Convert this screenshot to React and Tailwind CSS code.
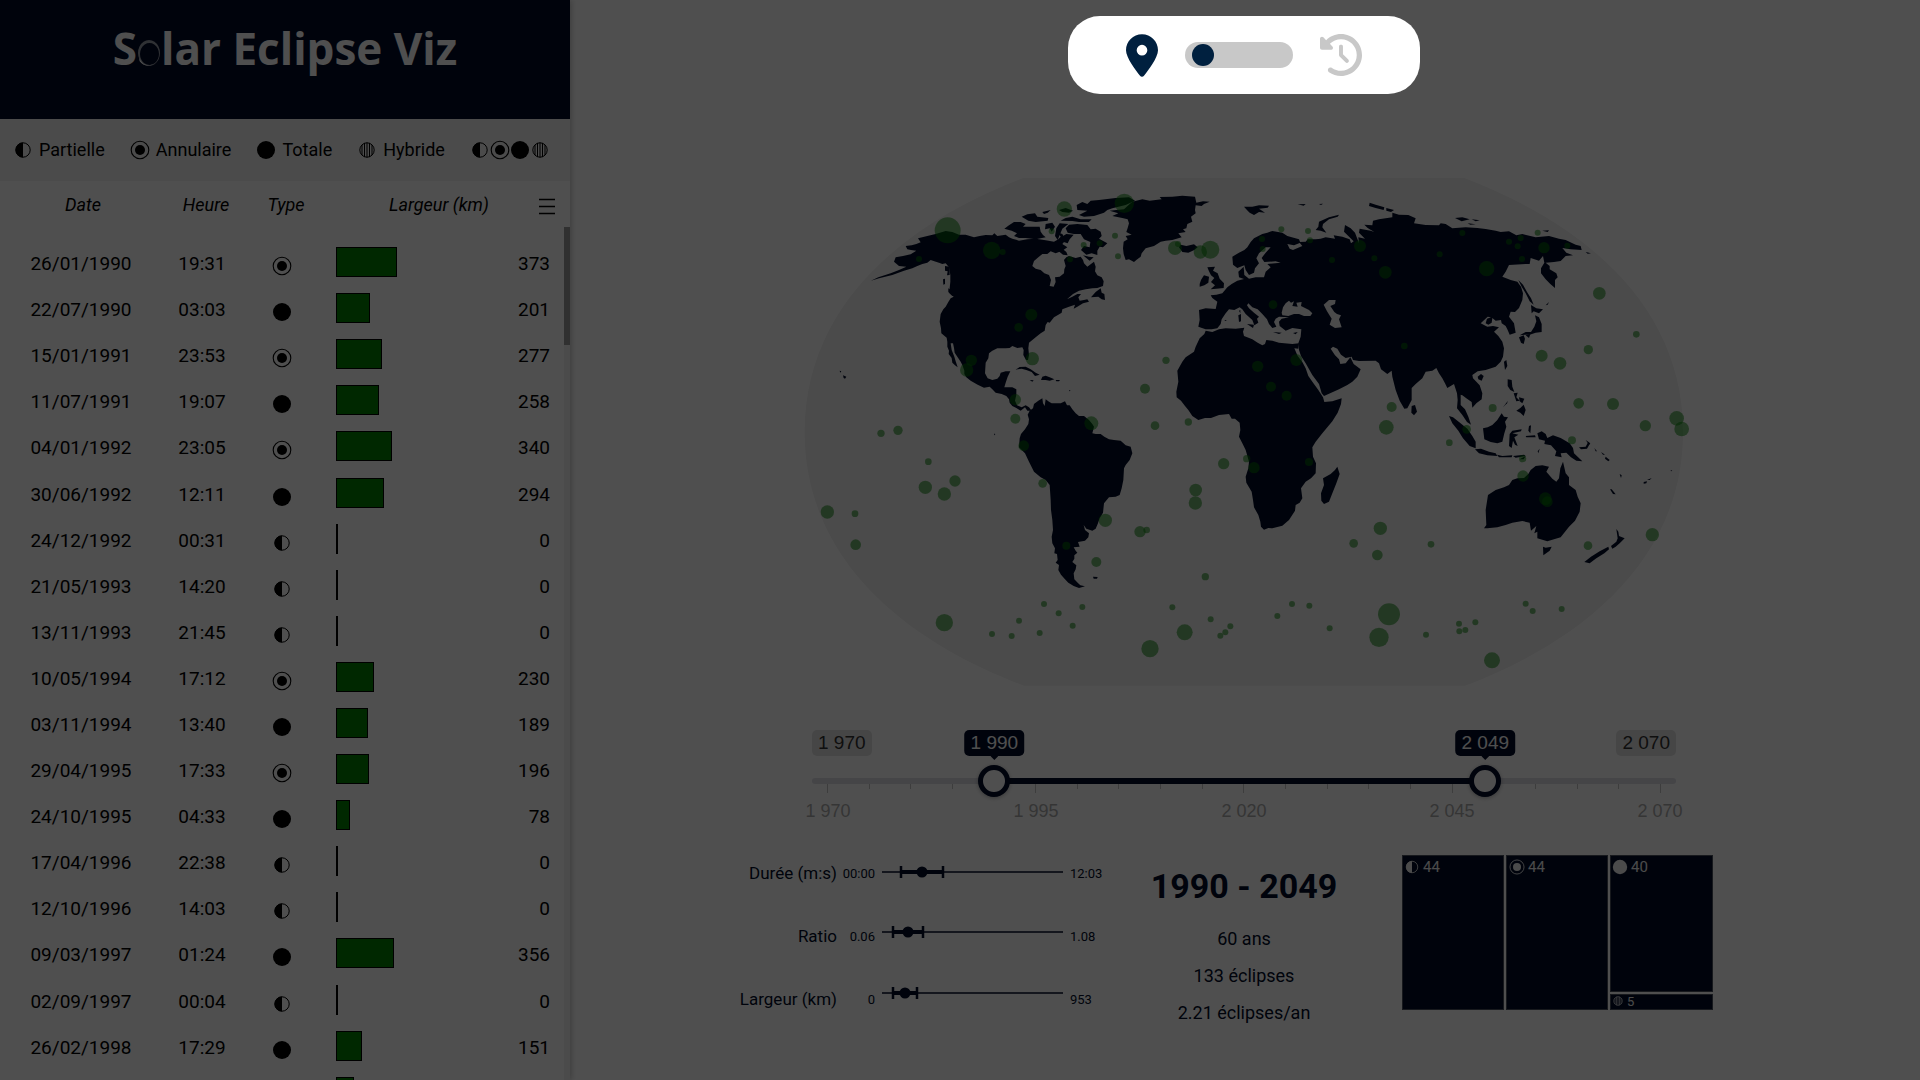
import React from "react";
import { FaLocationDot, FaClockRotateLeft } from "react-icons/fa6";

const ROWS = [
  ["26/01/1990", "19:31", "annular", 373],
  ["22/07/1990", "03:03", "total", 201],
  ["15/01/1991", "23:53", "annular", 277],
  ["11/07/1991", "19:07", "total", 258],
  ["04/01/1992", "23:05", "annular", 340],
  ["30/06/1992", "12:11", "total", 294],
  ["24/12/1992", "00:31", "partial", 0],
  ["21/05/1993", "14:20", "partial", 0],
  ["13/11/1993", "21:45", "partial", 0],
  ["10/05/1994", "17:12", "annular", 230],
  ["03/11/1994", "13:40", "total", 189],
  ["29/04/1995", "17:33", "annular", 196],
  ["24/10/1995", "04:33", "total", 78],
  ["17/04/1996", "22:38", "partial", 0],
  ["12/10/1996", "14:03", "partial", 0],
  ["09/03/1997", "01:24", "total", 356],
  ["02/09/1997", "00:04", "partial", 0],
  ["26/02/1998", "17:29", "total", 151],
  ["22/08/1998", "02:06", "annular", 99],
];

const SEA =
  "M733,54 C400,180 77,420 77,816 C77,1212 400,1452 735,1577 H2058 C2389,1452 2712,1212 2712,816 C2712,420 2389,180 2055,54 Z";

const LAND = [
  // North America
  "345,305 350,292 372,288 395,283 412,272 396,270 385,268 380,258 398,256 412,252 425,247 417,235 445,228 470,222 500,213 520,216 540,224 560,224 585,232 602,228 620,225 640,226 646,220 655,228 680,224 690,232 700,236 720,242 745,238 770,236 800,241 825,245 838,238 845,230 838,218 850,222 860,240 850,252 865,262 850,272 830,280 815,274 805,282 790,282 778,292 765,303 760,318 770,326 785,330 796,340 810,345 816,360 812,378 824,380 830,366 828,352 842,350 855,340 856,328 860,318 855,300 862,292 870,288 890,294 905,290 912,300 915,310 925,320 936,312 945,305 950,320 948,334 955,346 968,352 974,364 972,378 955,384 940,385 920,388 900,392 882,402 864,418 880,410 895,402 906,402 898,412 902,422 915,420 925,418 930,425 912,430 895,440 884,446 888,434 870,440 850,448 848,458 838,464 825,472 812,488 806,486 800,495 797,512 785,520 770,532 750,548 748,565 750,585 747,600 741,600 733,585 734,570 730,562 715,564 700,558 692,564 680,565 655,565 640,572 630,580 628,595 620,608 618,640 626,655 640,660 655,656 662,648 665,638 680,634 694,634 686,650 680,668 676,682 700,682 712,688 712,704 708,722 714,736 728,742 740,736 750,742 758,752 745,752 738,742 725,752 712,744 700,738 692,728 690,718 682,708 668,702 650,698 640,688 632,680 615,683 596,674 575,662 562,652 556,642 556,632 550,615 545,605 535,590 527,578 525,564 522,550 515,550 518,570 526,590 530,604 536,622 528,616 520,608 518,594 509,582 510,572 505,560 505,545 503,533 487,520 486,505 482,485 485,462 493,448 500,440 508,426 515,415 524,410 512,400 512,385 514,365 514,345 510,322 500,310 490,312 480,308 466,304 455,300 445,308 430,312 415,318 400,325 375,332 340,345 300,355 276,362 298,352 335,340 360,330 382,320 360,318",
  // South America
  "752,752 762,745 765,732 778,722 790,715 792,730 797,738 800,718 810,725 818,730 845,730 858,724 864,736 872,736 880,748 890,760 900,768 915,768 930,780 940,792 945,800 940,820 950,822 965,822 976,830 990,838 1005,840 1025,842 1040,856 1055,860 1060,880 1052,900 1040,915 1035,925 1033,960 1028,985 1022,1005 1010,1010 990,1012 975,1030 972,1058 962,1075 956,1092 950,1106 940,1112 922,1106 914,1095 918,1110 930,1120 928,1132 918,1142 897,1146 902,1160 884,1162 890,1172 895,1178 886,1186 886,1196 880,1206 892,1216 890,1228 884,1240 886,1258 896,1268 904,1276 918,1279 900,1284 884,1278 868,1268 858,1258 846,1244 838,1230 840,1215 830,1208 836,1200 834,1182 826,1180 828,1165 820,1150 818,1130 822,1110 820,1080 816,1050 815,1020 812,975 800,960 785,952 765,935 750,905 738,880 720,862 722,835 726,822 738,808 748,792 750,778 746,764",
  // Greenland
  "992,152 1012,150 1035,148 1048,136 1060,125 1090,118 1112,122 1130,120 1148,118 1142,111 1180,110 1210,107 1248,110 1252,128 1272,124 1292,125 1275,132 1268,138 1250,136 1248,150 1250,160 1236,170 1240,185 1225,192 1222,205 1212,208 1220,216 1198,220 1208,232 1180,240 1160,242 1145,245 1125,258 1100,265 1088,280 1085,290 1072,300 1065,306 1050,298 1040,300 1034,282 1032,265 1034,245 1046,238 1040,228 1058,224 1042,216 1046,204 1050,190 1046,178 1030,174 1000,168 1018,160",
  // Arctic islands
  "893,135 910,126 925,132 935,122 960,120 1010,114 1050,112 1068,122 1040,135 1000,145 985,150 975,158 945,168 915,170 900,165 925,152 895,150",
  "845,182 860,174 880,170 905,178 938,178 930,186 900,186 880,183",
  "676,206 690,196 705,186 725,186 740,192 732,200 755,200 782,200 785,215 792,225 800,232 770,238 740,234 720,234 705,228 714,220 698,212",
  "728,170 745,163 768,160 775,170 808,174 806,182 770,186 748,182",
  "790,156 815,150 806,158 795,162",
  "840,150 860,144 882,152 870,158 850,156",
  "860,205 870,194 895,192 925,195 935,208 950,206 965,215 968,228 960,236 985,250 972,262 962,260 955,272 955,285 938,280 922,284 906,270 915,258 932,262 934,246 915,238 905,222 885,222 866,218",
  "800,192 820,188 828,200 818,215 812,205 798,208",
  "832,205 842,190 868,192 850,206 840,230 836,240 828,228",
  "846,232 862,222 884,224 872,238 866,250 854,246",
  "832,268 840,260 852,268 862,276 866,286 852,284 842,276",
  "912,286 930,290 944,292 932,302",
  "936,412 950,396 965,385 968,398 976,402 978,420 968,418 958,410",
  "508,385 520,392 530,406 520,408 508,396",
  "498,318 512,320 512,345 504,346 506,334 498,332",
  "492,358 498,356 498,372 493,374",
  // Caribbean and Pacific islands
  "710,629 722,621 740,620 755,628 770,638 782,644 768,648 758,636 742,630 728,626",
  "790,650 800,647 812,652 826,658 812,662 800,660 786,660",
  "830,660 843,660 840,664 832,664", "752,660 764,661 760,665", "192,646 202,650 198,656 194,654",
  "182,632 187,634 184,638", "645,820 649,824 646,826", "870,690 875,692 871,694",
  "942,1250 956,1251 954,1256 944,1256",
  // North Atlantic
  "1200,262 1205,254 1222,258 1245,253 1256,262 1246,270 1228,278 1210,276",
  "1395,140 1420,140 1440,136 1470,137 1466,143 1440,146 1458,158 1440,156 1425,165 1412,158 1406,152",
  "1285,322 1308,320 1302,332 1316,340 1322,356 1335,370 1334,384 1312,386 1295,388 1308,376 1296,366 1306,354 1296,346 1290,334",
  "1262,372 1266,360 1275,346 1290,350 1288,368 1276,376 1262,380",
  // Eurasia
  "1360,290 1380,278 1396,270 1405,262 1415,246 1425,235 1450,222 1465,218 1480,213 1510,218 1525,228 1560,238 1564,248 1545,256 1525,252 1532,266 1542,270 1570,258 1560,246 1580,245 1586,238 1610,238 1625,236 1640,232 1668,236 1664,226 1690,230 1712,238 1716,250 1724,244 1708,228 1695,215 1698,195 1715,205 1728,218 1740,250 1738,232 1758,236 1740,218 1742,206 1775,212 1786,216 1766,204 1756,194 1780,196 1782,182 1800,178 1840,172 1840,158 1860,164 1888,165 1910,175 1905,190 1940,195 1980,196 1985,190 2000,192 2020,205 2060,202 2095,204 2120,207 2150,212 2165,216 2190,214 2212,226 2230,222 2270,232 2310,228 2340,236 2360,240 2390,254 2405,258 2408,270 2375,268 2350,264 2362,278 2382,286 2360,288 2345,303 2325,306 2300,308 2312,318 2312,328 2332,340 2336,352 2328,360 2328,384 2314,372 2300,358 2286,340 2286,325 2296,308 2292,288 2280,302 2255,294 2252,312 2240,312 2190,315 2180,335 2170,350 2195,360 2215,365 2226,380 2232,400 2230,420 2220,444 2208,456 2195,455 2190,470 2205,490 2210,518 2192,524 2186,510 2180,498 2168,490 2166,480 2150,482 2140,474 2138,488 2128,494 2120,490 2124,476 2136,472 2126,470 2105,490 2125,500 2142,498 2160,502 2145,515 2158,528 2170,545 2175,565 2172,590 2165,605 2150,620 2120,630 2096,634 2080,645 2082,655 2102,676 2110,700 2108,718 2092,730 2080,743 2078,726 2064,716 2050,706 2045,704 2045,735 2058,748 2068,770 2076,794 2064,786 2050,765 2034,745 2036,720 2034,700 2025,672 2005,684 1998,670 1990,655 1980,640 1972,624 1960,632 1940,635 1930,655 1910,672 1898,684 1898,720 1885,745 1876,746 1862,722 1850,690 1840,650 1838,632 1825,642 1806,628 1800,610 1790,602 1740,603 1722,600 1718,590 1700,594 1686,584 1675,566 1662,560 1655,566 1668,586 1680,598 1684,612 1700,610 1714,592 1724,612 1745,628 1735,650 1720,665 1705,675 1680,688 1635,708 1628,700 1620,672 1600,645 1580,610 1566,588 1560,570 1558,550 1565,530 1567,508 1540,504 1520,512 1502,498 1500,485 1508,476 1530,472 1500,470 1490,476 1485,486 1492,500 1480,504 1470,492 1464,478 1450,462 1436,448 1420,442 1408,430 1404,436 1410,445 1425,458 1440,470 1434,476 1438,488 1426,496 1420,480 1400,462 1390,448 1382,442 1366,450 1350,448 1340,460 1328,478 1325,492 1315,505 1298,508 1280,508 1258,500 1262,480 1260,450 1280,445 1310,447 1315,425 1300,414 1295,406 1312,404 1330,400 1345,382 1358,372 1375,362 1395,357 1380,352 1378,335 1394,320 1396,345 1410,356 1430,352 1455,352 1460,335 1475,322 1465,312 1505,308 1490,304 1456,306 1448,294 1460,278 1475,262 1460,262 1440,280 1432,295 1440,310 1428,325 1425,338 1410,345 1400,330 1396,316 1375,324 1362,314",
  // Africa
  "1280,512 1300,516 1320,508 1340,505 1370,506 1396,503 1392,515 1395,528 1420,538 1436,548 1450,556 1458,552 1462,540 1480,542 1500,548 1540,552 1560,550 1558,566 1546,565 1556,588 1570,606 1580,625 1588,648 1600,665 1618,690 1632,712 1636,726 1660,724 1688,715 1686,732 1676,758 1660,784 1630,820 1610,845 1600,862 1602,890 1611,910 1610,940 1596,955 1580,965 1566,985 1570,1015 1562,1028 1550,1035 1548,1052 1530,1080 1510,1097 1480,1105 1468,1104 1455,1109 1446,1100 1444,1085 1438,1065 1425,1042 1422,1020 1418,995 1402,968 1400,950 1408,925 1410,905 1400,870 1390,850 1380,830 1384,810 1382,788 1368,776 1358,776 1350,762 1320,765 1296,774 1278,774 1258,780 1240,768 1228,750 1218,738 1206,722 1193,712 1192,695 1198,665 1195,632 1210,605 1220,592 1245,575 1250,560 1262,535 1276,522",
  "1675,920 1682,942 1672,970 1660,1000 1650,1025 1635,1032 1627,1022 1626,1000 1635,975 1632,955 1655,942 1668,930",
  // South and east Asia islands
  "1898,738 1908,735 1914,755 1905,766 1897,758", "2010,768 2022,772 2040,786 2065,806 2080,828 2090,845 2090,865 2072,858 2052,835 2038,812 2020,790",
  "2088,868 2106,866 2130,875 2150,880 2155,888 2125,886 2100,880", "2154,884 2170,888 2200,886 2198,892 2160,892", "2202,888 2235,884 2240,888 2210,893", "2222,898 2240,888 2234,898",
  "2112,805 2126,802 2140,795 2155,780 2168,760 2175,770 2187,772 2178,785 2182,800 2176,820 2170,845 2155,850 2135,846 2116,838",
  "2192,822 2200,812 2228,808 2226,814 2200,820 2218,824 2206,832 2216,858 2208,854 2202,842 2198,864 2190,858",
  "2186,658 2198,660 2200,680 2206,696 2194,690 2186,678", "2204,700 2216,698 2212,712 2222,722 2212,724", "2220,712 2236,716 2230,730 2222,724", "2212,752 2224,744 2234,734 2240,750 2234,768 2224,758", "2172,742 2187,722 2184,730",
  "2175,605 2182,600 2185,618 2178,630", "2096,650 2106,642 2114,648 2108,662 2098,658",
  "2220,532 2234,526 2238,536 2234,552 2226,548", "2240,526 2254,522 2250,534", "2222,526 2240,516 2256,516 2266,500 2272,484 2268,466 2280,472 2288,492 2288,516 2270,518 2252,524 2238,524", "2256,435 2272,445 2292,448 2280,460 2264,454 2258,460", "2218,360 2232,374 2244,396 2256,415 2264,434 2252,424 2240,400 2228,380", "2300,436 2310,426 2306,434",
  "2275,820 2288,814 2300,822 2305,834 2322,826 2345,834 2372,850 2382,864 2385,880 2410,904 2392,902 2376,892 2362,878 2345,880 2348,892 2328,888 2332,874 2316,856 2296,852 2298,842 2280,838",
  "2250,798 2256,796 2254,820 2248,812", "2240,828 2268,826 2270,832 2242,832", "2276,874 2282,866 2278,880", "2400,862 2420,860 2428,845 2432,852 2424,866 2406,868", "2420,840 2434,850 2430,854", "2446,864 2454,874 2450,874", "2466,876 2478,884 2472,884", "2480,890 2492,900 2488,904 2478,896", "2522,942 2528,946 2526,954", "2594,966 2604,964 2602,970 2594,971", "2604,960 2618,954 2612,960", "2493,988 2498,988 2510,1003 2502,1002", "2675,930 2680,932 2676,934",
  // Australia and New Zealand
  "2125,1105 2115,1105 2122,1095 2120,1050 2127,1005 2150,990 2175,982 2190,975 2200,960 2215,955 2235,954 2248,942 2255,930 2270,918 2290,916 2310,920 2302,935 2320,956 2332,965 2340,955 2344,925 2352,905 2360,940 2370,952 2370,975 2390,990 2396,1010 2405,1030 2402,1055 2388,1082 2370,1100 2345,1132 2325,1138 2305,1144 2275,1135 2275,1115 2266,1120 2272,1098 2256,1112 2252,1088 2230,1083 2200,1088 2180,1095 2155,1102",
  "2292,1160 2300,1163 2318,1160 2312,1172 2293,1186",
  "2512,1107 2518,1115 2520,1128 2537,1135 2522,1150 2510,1160 2500,1166 2496,1158 2512,1145 2516,1135",
  "2416,1206 2436,1190 2462,1174 2488,1160 2490,1168 2476,1180 2452,1195 2432,1210",
  // Russian Arctic and Mediterranean islands
  "1610,210 1618,200 1620,185 1650,172 1680,164 1676,170 1650,178 1632,192 1630,202 1642,218 1625,212", "1770,138 1772,128 1790,134 1816,142 1814,150 1790,144", "1822,144 1845,150 1836,156 1822,152", "2028,174 2050,172 2072,178 2048,184", "2078,178 2102,181 2090,184", "2066,190 2090,193 2074,194", "2290,212 2310,211 2306,216", "1556,133 1580,132 1574,137", "1620,132 1632,131 1626,135", "2420,276 2436,280 2426,281",
  "1378,466 1386,462 1386,484 1380,486", "1380,452 1384,450 1384,460", "1404,492 1425,494 1422,504", "1482,516 1508,518 1500,522", "1542,519 1556,516 1550,523", "1336,480 1343,480 1340,483",
];

const LAKES = [
  "1508,458 1512,442 1520,430 1530,422 1536,428 1545,424 1540,438 1556,440 1552,428 1568,426 1566,438 1590,450 1600,460 1594,468 1575,468 1560,462 1545,462 1528,468 1510,466",
  "1634,434 1650,420 1670,420 1668,432 1654,438 1666,456 1674,462 1686,466 1680,478 1688,502 1668,504 1652,494 1658,476 1644,454",
];

const DOTS = [
  [506,211,39],[856,147,23],[1036,130,29],[818,214,9],[914,255,9],[962,250,9],[1008,227,9],[1017,289,9],[873,298,9],[638,271,26],[671,276,9],[420,297,9],[1188,264,21],[1197,252,9],[1264,276,20],[1294,269,27],[757,464,18],[719,502,13],[577,601,17],[563,630,20],[760,596,20],[1161,601,11],[1098,686,15],[709,719,17],[709,776,15],[937,790,21],[357,811,14],[306,820,11],[1128,797,13],[1228,786,11],
  [1507,208,9],[1449,237,9],[1451,267,9],[1587,213,9],[1593,241,9],[1659,300,9],[1743,258,18],[1786,295,9],[1819,337,19],[1982,283,9],[2050,219,9],[2123,326,23],[2190,245,9],[2225,234,9],[2216,259,9],[2229,297,9],[2276,218,9],[2295,263,17],[2365,257,9],[2461,400,19],[2572,523,10],[2428,569,14],[2288,587,18],[2343,610,19],[2399,730,16],[2502,732,18],[2599,797,17],[2693,775,22],[2708,807,22],[1482,434,13],[1876,558,10],[1436,619,17],[1552,600,18],[1476,680,15],[1523,707,15],[1838,741,15],[1822,802,22],[2141,744,12],[2063,808,13],
  [448,905,10],[439,982,20],[528,963,17],[496,1002,20],[145,1056,20],[228,1061,10],[230,1154,16],[734,857,16],[791,970,13],[979,1081,20],[1083,1115,17],[1103,1110,10],[862,1157,12],[952,1206,15],[1334,911,17],[1250,990,19],[1249,1029,20],[1279,1250,11],[795,1332,9],[839,1360,9],[910,1341,9],[720,1382,9],[881,1397,9],[639,1422,9],[698,1428,9],[782,1419,9],[496,1388,26],[1180,1342,9],[1217,1417,24],[1295,1378,9],[1113,1466,26],[1354,1399,9],[1339,1417,9],[1324,1427,9],
  [1403,896,11],[1425,923,17],[1590,906,12],[1804,1105,20],[1724,1150,13],[1795,1185,16],[1956,1153,10],[2011,848,10],[2379,841,12],[2231,896,11],[2232,948,17],[2299,1016,19],[2305,1025,16],[2427,1157,13],[2620,1124,20],[1539,1332,9],[1591,1337,9],[1495,1368,9],[1652,1405,9],[1830,1363,33],[1800,1432,29],[1941,1424,9],[2040,1391,9],[2041,1414,9],[2059,1410,9],[2089,1387,9],[2240,1331,9],[2261,1353,9],[2348,1347,9],[2139,1501,24],
];

const STATS = [
  { label: "Durée (m:s)", min: "00:00", max: "12:03", y: 12, from: 19, mean: 40, to: 61 },
  { label: "Ratio", min: "0.06", max: "1.08", y: 72, from: 11, mean: 26, to: 41 },
  { label: "Largeur (km)", min: "0", max: "953", y: 133, from: 11, mean: 23, to: 35 },
];

function TypeIcon({ type, className = "size-5" }) {
  return (
    <svg viewBox="0 0 20 20" className={className + " shrink-0"} fill="none" stroke="currentColor" aria-hidden="true">
      {type === "partial" && (
        <>
          <circle cx="10" cy="10" r="7.2" strokeWidth="1" />
          <path d="M10 2.500a7.500 7.500 0 0 0 0 15z" fill="currentColor" stroke="none" />
        </>
      )}
      {type === "annular" && (
        <>
          <circle cx="10" cy="10" r="8.8" strokeWidth="1.1" />
          <circle cx="10" cy="10" r="5" fill="currentColor" stroke="none" />
        </>
      )}
      {type === "total" && <circle cx="10" cy="10" r="9" fill="currentColor" stroke="none" />}
      {type === "hybrid" && (
        <>
          <circle cx="10" cy="10" r="7.2" strokeWidth="1" />
          <path d="M5 5v10M7.500 3v14M10 2.500v15M12.500 3v14M15 5v10" strokeWidth="1" />
        </>
      )}
    </svg>
  );
}

function Header() {
  return (
    <header className="flex h-[119px] justify-center bg-[#000b28] pt-[18px] text-white">
      <h1 className="flex h-[60px] items-center font-['Open_Sans','Noto_Sans',sans-serif] text-[44px] leading-[60px] font-bold whitespace-pre">
        S
        <svg viewBox="0 0 24 30" className="mt-3 h-[30px] w-6" aria-label="o" role="img">
          <path d="M12 1a11 13 0 1 0 .01 0zM12.500 4a9.500 11 0 1 1-.01 0z" fill="currentColor" fillRule="evenodd" opacity="0.6" />
          <path d="M2.500 19a10 10.500 0 0 0 19.500-2a11 11.800 0 0 1-19.500 5z" fill="currentColor" />
        </svg>
        lar Eclipse Viz
      </h1>
    </header>
  );
}

function Legend() {
  const items = [
    ["partial", "Partielle"],
    ["annular", "Annulaire"],
    ["total", "Totale"],
    ["hybrid", "Hybride"],
  ];
  return (
    <nav className="flex h-[62px] items-center justify-between bg-[#f2f2f2] pr-5 pl-[13px] text-[18px] leading-7">
      {items.map(([type, label]) => (
        <button key={type} type="button" className="flex items-center gap-[6px]">
          <TypeIcon type={type} />
          {label}
        </button>
      ))}
      <button type="button" aria-label="Tous les types" className="flex items-center">
        {items.map(([type]) => (
          <TypeIcon key={type} type={type} />
        ))}
      </button>
    </nav>
  );
}

function EclipseTable() {
  return (
    <div className="relative flex-1 overflow-hidden">
      <table className="h-[934px] w-full table-fixed border-collapse text-center text-[19px] leading-6">
        <colgroup>
          <col className="w-[162px]" />
          <col className="w-[80px]" />
          <col className="w-[80px]" />
          <col className="w-[168px]" />
          <col />
        </colgroup>
        <thead>
          <tr className="h-[58px] align-top text-[18px] italic">
            <th className="pt-3 pl-1 font-normal">Date</th>
            <th className="pt-3 pl-2 font-normal">Heure</th>
            <th className="pt-3 pl-2 font-normal">Type</th>
            <th className="pt-3 pl-[66px] font-normal whitespace-nowrap">Largeur (km)</th>
            <th className="pt-[17px] pr-[15px]">
              <button type="button" aria-label="Trier" className="ml-auto block">
                <svg viewBox="0 0 16 17" className="h-[17px] w-4" stroke="black" strokeWidth="1.3" aria-hidden="true">
                  <path d="M0 1.500h16M0 8.500h16M0 15.500h16" />
                </svg>
              </button>
            </th>
          </tr>
        </thead>
        <tbody>
          {ROWS.map(([date, time, type, width]) => (
            <tr key={date}>
              <td className="pt-1">{date}</td>
              <td className="pt-1">{time}</td>
              <td className="pt-2">
                <TypeIcon type={type} className="mx-auto size-5" />
              </td>
              <td className="pl-[14px]">
                <div className="h-[30px] border border-black bg-[#008000]" style={{ width: Math.round(width * 0.158) + 2 }} />
              </td>
              <td className="pt-1 pr-5 text-right">{width}</td>
            </tr>
          ))}
        </tbody>
      </table>
      <div className="absolute top-[46px] right-0 bottom-0 w-[6px] bg-[#f0f0f0]">
        <div className="h-[118px] bg-[#9a9a9a]" />
      </div>
    </div>
  );
}

function WorldMap() {
  return (
    <svg viewBox="60 30 2670 1590" className="mt-[76px] h-[530px] w-[890px]" role="img" aria-label="Carte des éclipses">
      <path d={SEA} fill="#f1f1f1" />
      <g fill="#000b28">
        {LAND.map((points) => (
          <polygon key={points.slice(0, 30)} points={points} />
        ))}
      </g>
      <g fill="#f1f1f1">
        {LAKES.map((points) => (
          <polygon key={points.slice(0, 30)} points={points} />
        ))}
      </g>
      <g fill="#008000" fillOpacity="0.52">
        {DOTS.map(([x, y, r]) => (
          <circle key={x + "-" + y} cx={x} cy={y} r={r} />
        ))}
      </g>
    </svg>
  );
}

const RANGE_CLASS =
  "pointer-events-none absolute inset-x-0 top-[35px] h-8 w-full appearance-none bg-transparent [&::-webkit-slider-thumb]:pointer-events-auto [&::-webkit-slider-thumb]:size-8 [&::-webkit-slider-thumb]:appearance-none [&::-webkit-slider-thumb]:rounded-full [&::-webkit-slider-thumb]:border-[5px] [&::-webkit-slider-thumb]:border-[#000b28] [&::-webkit-slider-thumb]:bg-white [&::-webkit-slider-thumb]:shadow-[0_1px_4px_rgba(0,0,0,0.3)]";

function YearTip({ year, text }) {
  return (
    <div
      className="absolute top-0 flex -translate-x-1/2 flex-col items-center"
      style={{ left: ((year - 1970) / 100) * 100 + "%" }}
    >
      <span className="h-[26px] rounded-[5px] bg-[#000b28] px-[6px] text-[19px] leading-[26px] whitespace-nowrap text-white">
        {text}
      </span>
      <span className="h-1 w-2 bg-[#000b28] [clip-path:polygon(0_0,100%_0,50%_100%)]" />
    </div>
  );
}

function YearSlider() {
  return (
    <div className="relative mt-[30px] h-[90px] w-[864px] font-['Liberation_Sans',sans-serif]">
      <div className="flex justify-between text-[19px] leading-[26px] text-[#333]">
        <span className="rounded-[5px] bg-[#e2e2e2] px-[6px]">1 970</span>
        <span className="rounded-[5px] bg-[#e2e2e2] px-[6px]">2 070</span>
      </div>
      <div className="mt-[22px] h-[6px] rounded-full bg-[#dedee6] px-4">
        <div className="relative h-full">
          <div className="absolute inset-y-0 right-[21%] left-[20%] bg-[#000b28]" />
        </div>
      </div>
      <div className="mx-[15px] flex items-start justify-between">
        {Array.from({ length: 21 }, (_, i) => (
          <span key={i} className={i % 5 === 0 ? "h-[9px] w-px bg-[#c4c4c4]" : "h-[5px] w-px bg-[#c4c4c4]"} />
        ))}
      </div>
      <div className="mx-[-14px] mt-2 flex justify-between text-[18px] leading-5 text-[#acacac]">
        {["1 970", "1 995", "2 020", "2 045", "2 070"].map((label) => (
          <span key={label} className="w-[60px] text-center">
            {label}
          </span>
        ))}
      </div>
      <div className="absolute inset-x-4 top-0">
        <YearTip year={1990} text="1 990" />
        <YearTip year={2049} text="2 049" />
      </div>
      <input type="range" aria-label="Année de début" min="1970" max="2070" defaultValue="1990" className={RANGE_CLASS} />
      <input type="range" aria-label="Année de fin" min="1970" max="2070" defaultValue="2049" className={RANGE_CLASS} />
    </div>
  );
}

function StatRanges() {
  return (
    <section className="flex justify-end text-[#000b28]">
      <div className="text-right text-[17px] leading-[63px]">
        {STATS.map((s) => (
          <div key={s.label} className="h-[63px]">{s.label}</div>
        ))}
      </div>
      <div className="w-[38px] text-right text-[13px] leading-[63px]">
        {STATS.map((s) => (
          <div key={s.label} className="h-[63px]">{s.min}</div>
        ))}
      </div>
      <svg viewBox="0 0 181 146" className="mx-[7px] mt-[18px] h-[146px] w-[181px]" stroke="currentColor" aria-hidden="true">
        {STATS.map((s) => (
          <g key={s.label}>
            <path d={`M0 ${s.y}H181`} strokeWidth="1.5" />
            <path d={`M${s.from} ${s.y}H${s.to}`} strokeWidth="4" />
            <path d={`M${s.from} ${s.y - 6}v12M${s.to} ${s.y - 6}v12`} strokeWidth="2.5" />
            <circle cx={s.mean} cy={s.y} r="5.5" fill="currentColor" stroke="none" />
          </g>
        ))}
      </svg>
      <div className="w-[31px] text-[13px] leading-[63px]">
        {STATS.map((s) => (
          <div key={s.label} className="h-[63px]">{s.max}</div>
        ))}
      </div>
    </section>
  );
}

function TreeCell({ type, count, className }) {
  return (
    <div className={"flex items-start border border-[#4a525e] bg-[#000b28] text-[#f0f0f0] " + className}>
      <TypeIcon type={type} className={count > 9 ? "mt-[3px] size-4" : "size-3"} />
      {count}
    </div>
  );
}

function TreeMap() {
  return (
    <section className="mt-[13px] ml-[15px] grid h-[155px] w-[311px] grid-cols-[102px_102px_1fr] gap-[2px] text-[15px] leading-[22px]">
      <TreeCell type="partial" count={44} className="gap-[3px] pl-px" />
      <TreeCell type="annular" count={44} className="gap-[3px] pl-[2px]" />
      <div className="flex flex-col gap-[2px]">
        <TreeCell type="total" count={40} className="flex-1 gap-[3px] pl-px" />
        <TreeCell type="hybrid" count={5} className="h-4 items-center gap-[3px] pl-px text-[13px] leading-[14px]" />
      </div>
    </section>
  );
}

function ModeSwitch() {
  return (
    <div className="relative z-20 mt-4 flex h-[78px] w-[352px] items-center justify-center gap-[27px] rounded-[32px] bg-white">
      <FaLocationDot className="h-[43px] w-8 text-[#00203f]" aria-hidden="true" />
      <input
        type="checkbox"
        role="switch"
        aria-label="Mode historique"
        className="flex h-[26px] w-[108px] appearance-none items-center rounded-full bg-[#c8c8c8] px-[7px] before:size-[22px] before:rounded-full before:bg-[#00203f] checked:justify-end"
      />
      <FaClockRotateLeft className="size-[42px] text-[#c8c8c8]" aria-hidden="true" />
    </div>
  );
}

export default function App() {
  return (
    <div className="relative flex h-screen overflow-hidden bg-white font-['Roboto',sans-serif] text-black">
      <aside className="flex w-[570px] shrink-0 flex-col bg-[#fdfdfd] shadow-[1px_0_6px_rgba(0,0,0,0.25)]">
        <Header />
        <Legend />
        <EclipseTable />
      </aside>
      <main className="flex min-w-0 flex-1 flex-col items-center pr-[2px]">
        <ModeSwitch />
        <WorldMap />
        <YearSlider />
        <div className="mt-[22px] grid w-full grid-cols-[1fr_286px_1fr]">
          <StatRanges />
          <section className="pt-[22px] text-center text-[18px] leading-[37px] text-[#000b28]">
            <h2 className="mb-3 text-[34px] leading-[44px] font-bold">1990 - 2049</h2>
            <p>60 ans</p>
            <p>133 éclipses</p>
            <p>2.21 éclipses/an</p>
          </section>
          <TreeMap />
        </div>
      </main>
      <div className="pointer-events-none absolute inset-0 z-10 bg-black/69" />
    </div>
  );
}
